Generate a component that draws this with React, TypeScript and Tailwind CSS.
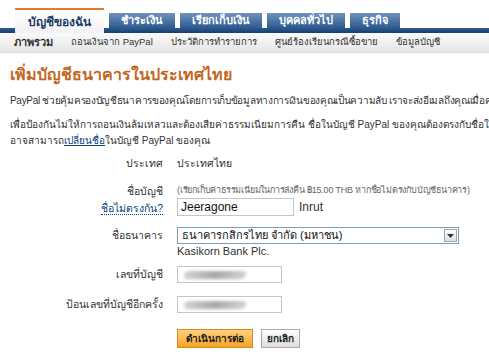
import React from "react";

const font = { fontFamily: '"Liberation Sans", "Noto Sans", Tahoma, sans-serif' };

function Tab({ label, active }: { label: string; active?: boolean }) {
  if (active) {
    return (
      <div className="relative z-10 h-[25px] px-[13px] pt-[4px] border-t-2 border-[#e3793b] bg-gradient-to-b from-white to-[#f2f2f2] text-[12px] font-bold text-[#1a3b66] leading-[16px]">
        {label}
      </div>
    );
  }
  return (
    <div className="mt-[5px] h-[15px] px-[12px] bg-gradient-to-b from-[#6f93bd] to-[#2c5a90] text-[11px] font-bold text-white leading-[15px]">
      {label}
    </div>
  );
}

function Blurred() {
  return (
    <div className="h-[17px] w-[105px] border border-[#b9c7d6] bg-white flex items-center px-[6px]">
      <div className="h-[8px] w-[62px] -skew-x-12 rounded-full bg-gradient-to-r from-[#d4d4d4] via-[#a8a8a8] to-[#d4d4d4] blur-[1.5px]" />
    </div>
  );
}

export default function App() {
  return (
    <div style={font} className="w-[489px] h-[361px] overflow-hidden bg-white text-[#333]">
      {/* tabs */}
      <div className="pt-[8px]">
        <div className="flex items-start gap-[5px] pl-[15px] h-[20px]">
          <Tab label="บัญชีของฉัน" active />
          <Tab label="ชำระเงิน" />
          <Tab label="เรียกเก็บเงิน" />
          <Tab label="บุคคลทั่วไป" />
          <Tab label="ธุรกิจ" />
        </div>
        <div className="h-[5px] bg-gradient-to-b from-[#2c5a90] to-[#173f6e]" />
        <div className="h-[20px] bg-gradient-to-b from-[#fafafa] to-[#e6e6e6] border-b border-[#dcdcdc] flex items-center gap-[18px] pl-[14px] text-[9.5px] text-[#333] whitespace-nowrap">
          <span className="font-bold text-[11px]">ภาพรวม</span>
          <span>ถอนเงินจาก PayPal</span>
          <span>ประวัติการทำรายการ</span>
          <span>ศูนย์ร้องเรียนกรณีซื้อขาย</span>
          <span>ข้อมูลบัญชี</span>
        </div>
      </div>

      {/* content */}
      <div className="pl-[10px] pt-[11px] whitespace-nowrap">
        <h1 className="text-[16px] font-bold text-[#c4661f] leading-[22px]">เพิ่มบัญชีธนาคารในประเทศไทย</h1>
        <p className="mt-[8px] text-[10px] tracking-[-0.3px] leading-[14px]">
          PayPal ช่วยคุ้มครองบัญชีธนาคารของคุณโดยการเก็บข้อมูลทางการเงินของคุณเป็นความลับ เราจะส่งอีเมลถึงคุณเมื่อคุณ
        </p>
        <p className="mt-[9px] text-[10px] leading-[16px]">
          เพื่อป้องกันไม่ให้การถอนเงินล้มเหลวและต้องเสียค่าธรรมเนียมการคืน ชื่อในบัญชี PayPal ของคุณต้องตรงกับชื่อในบัญชี
          <br />
          อาจสามารถ<span className="text-[#084482] underline">เปลี่ยนชื่อ</span>ในบัญชี PayPal ของคุณ
        </p>

        <div className="mt-[6px] grid grid-cols-[153px_auto] gap-x-[14px] text-[10.5px]">
          <div className="text-right leading-[16px]">ประเทศ</div>
          <div className="leading-[16px]">ประเทศไทย</div>

          <div className="mt-[12px] text-right leading-[16px]">
            ชื่อบัญชี
            <div className="mt-[1px]">
              <span className="text-[#084482] border-b border-dotted border-[#084482]">ชื่อไม่ตรงกัน?</span>
            </div>
          </div>
          <div className="mt-[12px]">
            <div className="text-[9px] tracking-[-0.2px] text-[#666] leading-[15px]">
              (เรียกเก็บค่าธรรมเนียมในการส่งคืน ฿15.00 THB หากชื่อไม่ตรงกับบัญชีธนาคาร)
            </div>
            <div className="flex items-center gap-[5px]">
              <div className="h-[18px] w-[117px] border border-[#b9c7d6] bg-white px-[3px] text-[12px] leading-[16px] text-[#111]">
                Jeeragone
              </div>
              <span className="text-[12px]">Inrut</span>
            </div>
          </div>

          <div className="mt-[11px] text-right leading-[16px]">ชื่อธนาคาร</div>
          <div className="mt-[11px]">
            <div className="h-[17px] w-[282px] border border-[#7f9db9] bg-white flex items-center justify-between pl-[4px] pr-[1px] text-[11px]">
              <span className="text-[#111]">ธนาคารกสิกรไทย จำกัด (มหาชน)</span>
              <span className="h-[13px] w-[13px] border border-[#9aa] bg-gradient-to-b from-white to-[#dde] flex items-center justify-center">
                <svg width="7" height="4" viewBox="0 0 7 4"><path d="M0 0h7L3.5 4z" fill="#333" /></svg>
              </span>
            </div>
            <div className="text-[11px] leading-[14px]">Kasikorn Bank Plc.</div>
          </div>

          <div className="mt-[8px] text-right leading-[16px]">เลขที่บัญชี</div>
          <div className="mt-[8px]"><Blurred /></div>

          <div className="mt-[13px] text-right leading-[16px]">ป้อนเลขที่บัญชีอีกครั้ง</div>
          <div className="mt-[13px]"><Blurred /></div>

          <div />
          <div className="mt-[16px] flex gap-[8px]">
            <div className="h-[19px] px-[8px] border border-[#d28a2a] bg-gradient-to-b from-[#ffd27a] to-[#f7a21b] text-[10px] font-bold text-[#222] leading-[17px]">
              ดำเนินการต่อ
            </div>
            <div className="h-[19px] px-[5px] border border-[#aaa] bg-gradient-to-b from-white to-[#ddd] text-[10px] font-bold text-[#222] leading-[17px]">
              ยกเลิก
            </div>
          </div>
        </div>
      </div>
    </div>
  );
}
